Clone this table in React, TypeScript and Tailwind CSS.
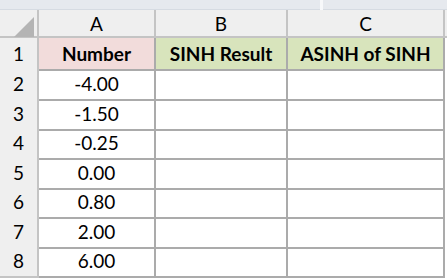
const ROWS = [
  { n: 2, v: "-4.00" },
  { n: 3, v: "-1.50" },
  { n: 4, v: "-0.25" },
  { n: 5, v: "0.00" },
  { n: 6, v: "0.80" },
  { n: 7, v: "2.00" },
  { n: 8, v: "6.00" },
];

// row heights so lines land where the screenshot has them
const HEIGHTS = ["h-[30px]", "h-[29px]", "h-[30px]", "h-[29px]", "h-[30px]", "h-[29px]", "h-[30px]"];

const font = { fontFamily: "Lato, 'Open Sans', sans-serif" };

export default function App() {
  return (
    <div className="w-[447px] h-[278px] bg-white overflow-hidden text-[19px] text-black" style={font}>
      {/* formula bar strip */}
      <div className="h-[10px] flex bg-[#e6e9ee]">
        <div className="w-[320px] border-b border-[#d6dbe2]" />
        <div className="w-[3px] bg-[#f7f8fa]" />
        <div className="flex-1 border-b border-[#d6dbe2]" />
      </div>

      {/* column headers */}
      <div className="grid grid-cols-[39px_117px_132px_157px] h-[28px] bg-[#efefef] border-b-2 border-[#c4c4c4]">
        <div className="relative border-r-2 border-[#c4c4c4]">
          <svg className="absolute right-[3px] bottom-[2px]" width="20" height="20" viewBox="0 0 20 20">
            <polygon points="20,0 20,20 0,20" fill="#b4b4b4" />
          </svg>
        </div>
        <div className="flex items-center justify-center border-r-2 border-[#c4c4c4]">A</div>
        <div className="flex items-center justify-center border-r-2 border-[#c4c4c4]">B</div>
        <div className="flex items-center justify-center border-r-2 border-[#c4c4c4]">C</div>
      </div>

      {/* row 1: headers */}
      <div className="grid grid-cols-[39px_117px_132px_157px] h-[30px]">
        <div className="flex items-center justify-center pt-[2px] bg-[#efefef] border-r-2 border-b-2 border-[#c4c4c4]">1</div>
        <div className="flex items-center justify-center pt-[2px] bg-[#f2dcdb] font-bold border-r-2 border-b-2 border-[#ababab]">Number</div>
        <div className="flex items-center justify-center pt-[2px] bg-[#d8e4bc] font-bold border-r-2 border-b-2 border-[#ababab]">SINH Result</div>
        <div className="flex items-center justify-center pt-[2px] bg-[#d8e4bc] font-bold border-r-2 border-b-2 border-[#ababab]">ASINH of SINH</div>
      </div>

      {ROWS.map((r, i) => (
        <div key={r.n} className={`grid grid-cols-[39px_117px_132px_157px] ${HEIGHTS[i]}`}>
          <div className="flex items-center justify-center pt-[2px] bg-[#efefef] border-r-2 border-b-2 border-[#c4c4c4]">{r.n}</div>
          <div className="flex items-center justify-center pt-[2px] border-r-2 border-b-2 border-[#ababab]">{r.v}</div>
          <div className="border-r-2 border-b-2 border-[#ababab]" />
          <div className="border-r-2 border-b-2 border-[#ababab]" />
        </div>
      ))}
    </div>
  );
}
